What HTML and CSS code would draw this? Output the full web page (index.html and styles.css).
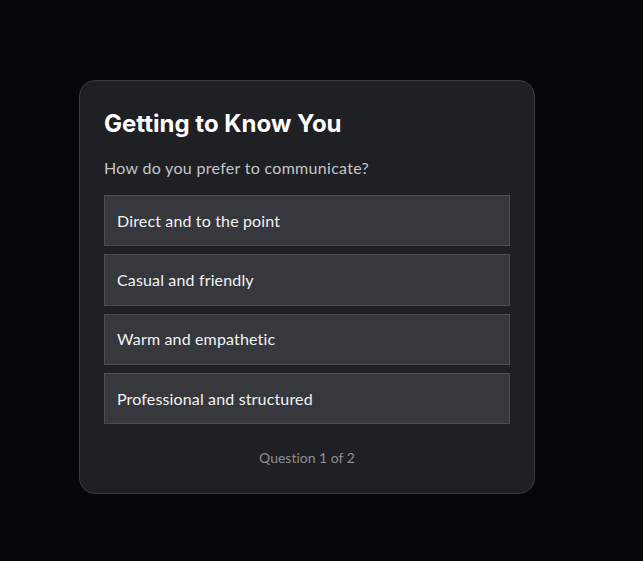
FILE: index.html
```html
<!DOCTYPE html>
<html lang="en">
<head>
<meta charset="utf-8">
<title>Getting to Know You</title>
<link rel="stylesheet" href="styles.css">
</head>
<body>
<main class="page">
  <section class="card">
    <h1 class="title">Getting to Know You</h1>
    <p class="question">How do you prefer to communicate?</p>
    <div class="options">
      <button class="option">Direct and to the point</button>
      <button class="option">Casual and friendly</button>
      <button class="option">Warm and empathetic</button>
      <button class="option">Professional and structured</button>
    </div>
    <p class="progress">Question 1 of 2</p>
  </section>
</main>
</body>
</html>
```

FILE: styles.css
```css
html, body {
  margin: 0;
  padding: 0;
  background: #06070b;
  height: 100%;
}
body {
  font-family: Lato, "Noto Sans", sans-serif;
  font-variant-ligatures: none;
  color: #f2f2f3;
}
.page {
  padding: 80px 0 0 79px;
  display: flex;
  align-items: flex-start;
}
.card {
  box-sizing: border-box;
  width: 456px;
  background: #1f2024;
  border: 1px solid #3b3c41;
  border-radius: 16px;
  padding: 25px 24px 25px;
  display: flex;
  flex-direction: column;
}
.title {
  margin: 0;
  font-family: Inter, Lato, sans-serif;
  font-size: 24px;
  font-weight: 700;
  line-height: 36px;
  color: #ffffff;
}
.question {
  margin: 14px 0 15px;
  font-size: 16px;
  line-height: 24px;
  letter-spacing: 0.3px;
  color: #c4c5c9;
}
.options {
  display: flex;
  flex-direction: column;
  gap: 8px;
}
.option {
  box-sizing: border-box;
  text-align: left;
  font-family: inherit;
  font-size: 16px;
  line-height: 24px;
  letter-spacing: 0.15px;
  padding: 12.67px 12px;
  background: #37383d;
  border: 1px solid #4c4d52;
  border-radius: 0;
  color: #f2f2f3;
}
.progress {
  margin: 23px 0 0;
  text-align: center;
  font-size: 14px;
  line-height: 21px;
  color: #8d8e93;
}
```
